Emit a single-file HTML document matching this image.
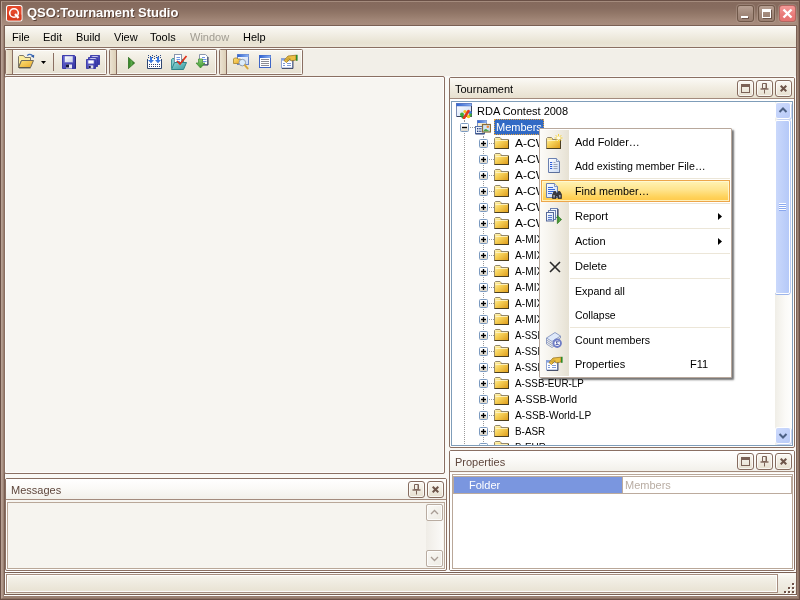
<!DOCTYPE html>
<html>
<head>
<meta charset="utf-8">
<title>QSO:Tournament Studio</title>
<style>
html,body{margin:0;padding:0;}
body{width:800px;height:600px;overflow:hidden;position:relative;background:#9c8273;font-family:"Liberation Sans",sans-serif;font-size:11px;color:#000;}
div,span{box-sizing:border-box;}
.a{position:absolute;}
#frame{position:absolute;left:0;top:0;width:800px;height:600px;background:#9c8273;border:1px solid #6a5046;}
#frame2{position:absolute;left:1px;top:1px;width:798px;height:598px;border:1px solid #b69f92;border-top-color:#a48b7d;border-right-color:#8d7365;border-bottom-color:#8d7365;box-shadow:inset 1px 0 0 #ac9588;}
#titlebar{position:absolute;left:2px;top:2px;width:796px;height:24px;background:linear-gradient(#856a5d 0px,#876c5f 6px,#937869 12px,#a18677 18px,#aa8f80 24px);}
#title{position:absolute;left:27px;top:5px;font-size:13px;font-weight:bold;color:#fff;text-shadow:1px 1px 0 #5a4238;white-space:nowrap;}
#inner{position:absolute;left:4px;top:25px;width:793px;height:570px;border:1px solid #7a6054;background:#faf9f6;}
#menubar{position:absolute;left:5px;top:26px;width:791px;height:21px;background:linear-gradient(#fdfcfa 0,#f8f6f0 2px,#f3f0e7 7px,#ebe6d8 14px,#e8e2d2 17px,#ece7da 21px);}
.mi{position:absolute;top:31px;font-size:11px;white-space:nowrap;}
.hl{position:absolute;height:1px;}
.tb{position:absolute;top:49px;height:26px;border:1px solid #8a6f62;border-radius:1.5px;box-shadow:inset 0 0 0 1px rgba(255,255,255,.75);background:linear-gradient(#f8f6ef,#ece7da 60%,#e7e1d2);}
.grip{position:absolute;left:0px;top:0px;width:7px;height:24px;background:linear-gradient(90deg,#ece3d2,#dccfb6);border-right:1px solid #8a6f62;border-radius:1px 0 0 1px;}
.panel{position:absolute;border:1px solid #8a6f62;background:#f7f5f1;border-radius:2px;box-shadow:inset 0 0 0 1px rgba(255,255,255,.8);}
.phead{position:absolute;left:0;top:0;right:0;height:21px;background:linear-gradient(#fbfaf6 0,#f3efe5 40%,#e7e0cf 100%);border-bottom:1px solid #a38b7d;}
.ptitle{position:absolute;left:5px;top:5px;font-size:11px;color:#000;white-space:nowrap;}
.pbtn{position:absolute;top:2px;width:17px;height:17px;border:1px solid #866c5f;border-radius:3px;background:linear-gradient(#fbf9f4,#e6dfcf);box-shadow:inset 0 0 0 1px rgba(255,255,255,.7);}

.trow{position:absolute;left:0;width:340px;height:16px;}
.tl{position:absolute;top:1px;font-size:11px;line-height:13px;white-space:nowrap;transform-origin:0 0;}
.pm{position:absolute;top:3px;width:9px;height:9px;border:1px solid #7b9ac0;border-radius:1.5px;background:linear-gradient(#fff 20%,#dcd6c8);}
.pm i{position:absolute;background:#000;}
.pm i.h{left:1px;top:3px;width:5px;height:1px;box-shadow:0 .4px 0 rgba(0,0,0,.45),0 -.4px 0 rgba(0,0,0,.45);}
.pm i.v{left:3px;top:1px;width:1px;height:5px;box-shadow:.4px 0 0 rgba(0,0,0,.45),-.4px 0 0 rgba(0,0,0,.45);}
.fi{position:absolute;}
.hc{position:absolute;top:7px;height:1px;border-top:1px dotted #9a9a9a;}

.sbtn{position:absolute;width:14px;height:15px;border-radius:2px;background:linear-gradient(135deg,#cddafc,#b9cbf8);box-shadow:0 0 0 1px #fff,1px 1px 0 1px #c6d3f3;}
.sbtn svg{position:absolute;left:0;top:0;}

.cmi{transform-origin:0 0;position:absolute;left:35px;font-size:11px;line-height:13px;white-space:nowrap;color:#000;}

.wbtn{position:absolute;top:5px;width:17px;height:17px;border:1px solid #705849;border-radius:3px;background:linear-gradient(#b7a093,#a1887a 55%,#9a8072);box-shadow:0 0 0 1px rgba(190,170,158,.35);}
.wclose{background:linear-gradient(#f49a98,#e87a78 60%,#e57472);border-color:#b46660;}
.sq{position:absolute;}

.dbtn{position:absolute;width:17px;height:17px;border:1px solid #b9aca1;border-radius:2px;background:linear-gradient(135deg,#f9f8f4,#eeebe4);box-shadow:inset 0 0 0 1px rgba(255,255,255,.8);}
.dbtn svg{position:absolute;left:0;top:0;}

.inact .phead{background:linear-gradient(#ffffff 0,#faf9f6 50%,#f2f0ea 100%);}
.inact .ptitle{color:#5e463c;}
</style>
</head>
<body>
<div id="root" style="position:absolute;left:0;top:0;width:800px;height:600px;overflow:hidden;transform:translateZ(0);will-change:transform">
<svg width="0" height="0" style="position:absolute">
<defs>
  <linearGradient id="gFold" x1="0" y1="0" x2="1" y2="1"><stop offset="0" stop-color="#fff4bc"/><stop offset=".4" stop-color="#f8d45c"/><stop offset="1" stop-color="#dc9a18"/></linearGradient>
  <symbol id="fold" viewBox="0 0 16 14">
    <path d="M0.5 1.5 L1.5 0.5 L6 0.5 L7 1.5 L7 2.5 L14.5 2.5 L14.5 11.5 L0.5 11.5 Z" fill="url(#gFold)" stroke="#94886c" stroke-width="1"/>
    <path d="M1.5 1.5 H6" stroke="#fdf0a8" stroke-width="1"/>
    <path d="M1.5 3.5 L13.5 3.5" stroke="#fff8d2" stroke-width="1" opacity=".8"/>
    <path d="M0.5 11.5 H15 M14.5 3 V12" stroke="#3f3314" stroke-width="1" opacity=".85"/>
  </symbol>

  <linearGradient id="gBlueBar" x1="0" y1="0" x2="1" y2="0"><stop offset="0" stop-color="#2f62d0"/><stop offset="1" stop-color="#8fb4f2"/></linearGradient>
  <linearGradient id="gWinBody" x1="0" y1="0" x2="1" y2="1"><stop offset="0" stop-color="#ffffff"/><stop offset="1" stop-color="#c9daf5"/></linearGradient>
  <symbol id="icRoot" viewBox="0 0 16 16">
    <rect x="0.5" y="0.5" width="15" height="13" fill="url(#gWinBody)" stroke="#7c8cb4"/>
    <rect x="0.5" y="0.5" width="15" height="2.5" fill="url(#gBlueBar)" stroke="#4a6cc0" stroke-width=".5"/>
    <path d="M15.5 3 V13.5 H1" stroke="#39415c" fill="none"/>
    <circle cx="6" cy="11.5" r="2" fill="#3fae3a"/>
    <circle cx="7" cy="14" r="1.6" fill="#2f9a2f"/>
    <circle cx="9" cy="8.5" r="1.6" fill="#f6c21c"/>
    <circle cx="12.5" cy="13.5" r="1.8" fill="#f6c21c"/>
    <circle cx="14.2" cy="9.5" r="1.6" fill="#3c7de0"/>
    <circle cx="14.5" cy="12" r="1.4" fill="#3fae3a"/>
    <path d="M8 15 L12.5 8" stroke="#e2381c" stroke-width="2.6" stroke-linecap="round"/>
  </symbol>
  <symbol id="icMembers" viewBox="0 0 16 16">
    <rect x="2.5" y="0.5" width="9" height="8" fill="#f6ecd0" stroke="#7e93c4"/>
    <rect x="2.5" y="0.5" width="9" height="2.5" fill="url(#gBlueBar)"/>
    <rect x="0.5" y="6.5" width="9" height="7" fill="#eef3fc" stroke="#5470a8"/>
    <path d="M0.5 14 H9.5" stroke="#2b3f73"/>
    <g fill="#27407e"><rect x="2" y="8" width="1.4" height="1.4"/><rect x="4.3" y="8" width="1.4" height="1.4"/><rect x="6.6" y="8" width="1.4" height="1.4"/><rect x="2" y="10.6" width="1.4" height="1.4"/><rect x="4.3" y="10.6" width="1.4" height="1.4"/><rect x="6.6" y="10.6" width="1.4" height="1.4"/></g>
    <rect x="7.5" y="4.5" width="8" height="7.5" fill="#cfe4f6" stroke="#8a6d3b" stroke-width="1.2"/>
    <circle cx="12.8" cy="6.8" r="1.3" fill="#f08a3c"/>
    <path d="M8.2 11.3 Q10.5 7.5 12.5 10 L14.8 11.3 Z" fill="#4da646"/>
  </symbol>

  <linearGradient id="gFlap" x1="0" y1="0" x2="1" y2="1"><stop offset="0" stop-color="#fde27a"/><stop offset="1" stop-color="#e9a828"/></linearGradient>
  <linearGradient id="gFloppy" x1="0" y1="0" x2="1" y2="1"><stop offset="0" stop-color="#6a6ad8"/><stop offset="1" stop-color="#3434a0"/></linearGradient>
  <linearGradient id="gLabel" x1="0" y1="0" x2="1" y2="1"><stop offset="0" stop-color="#ffffff"/><stop offset="1" stop-color="#c8cfe6"/></linearGradient>
  <linearGradient id="gPlay" x1="0" y1="0" x2="1" y2="0"><stop offset="0" stop-color="#2a7a18"/><stop offset=".5" stop-color="#5aa84a"/><stop offset="1" stop-color="#1f6a10"/></linearGradient>
  <linearGradient id="gGreenArr" x1="0" y1="0" x2="0" y2="1"><stop offset="0" stop-color="#8fd07a"/><stop offset="1" stop-color="#3a962c"/></linearGradient>
  <linearGradient id="gTeal" x1="0" y1="0" x2="1" y2="1"><stop offset="0" stop-color="#8fd6d6"/><stop offset="1" stop-color="#3a9aa0"/></linearGradient>
  <symbol id="floppy" viewBox="0 0 14 14">
    <path d="M0.5 0.5 H12.5 L13.5 1.5 V13.5 H0.5 Z" fill="url(#gFloppy)" stroke="#3a3aa8" stroke-width="1"/>
    <rect x="2.5" y="1" width="8.5" height="6.5" fill="url(#gLabel)" stroke="#5a5ac0" stroke-width=".5"/>
    <rect x="4" y="9.5" width="6" height="4" fill="#e8e8f4"/>
    <rect x="4" y="9.5" width="3" height="3" fill="#15153a"/>
    <path d="M13.5 2 V13.5" stroke="#25257a"/>
  </symbol>
  <symbol id="floppyS" viewBox="0 0 11 11">
    <path d="M0.5 0.5 H10.5 V10.5 H0.5 Z" fill="url(#gFloppy)" stroke="#3535a5" stroke-width="1"/>
    <rect x="2.5" y="1.5" width="6" height="3.5" fill="#fff"/>
    <rect x="3" y="7" width="5" height="3.5" fill="#dcdcec"/>
    <rect x="3" y="7.5" width="2.2" height="2.5" fill="#1a1a40"/>
  </symbol>
</defs>
</svg>
<div id="frame"></div>
<div id="frame2"></div>
<div id="titlebar"></div>
<!-- app icon -->
<svg class="a" style="left:6px;top:5px" width="17" height="17" viewBox="0 0 17 17">
  <rect x="0" y="0" width="16.5" height="16.5" rx="2.5" fill="#fff"/>
  <rect x="1" y="1" width="14.5" height="14.5" rx="1.5" fill="#e4482a"/>
  <rect x="1" y="9" width="14.5" height="6.5" rx="1.5" fill="#cf3519" opacity=".6"/>
  <circle cx="8" cy="8" r="4.3" fill="none" stroke="#fff" stroke-width="1.6"/>
  <path d="M9 9 L12.5 13" stroke="#fff" stroke-width="2.2" stroke-linecap="butt"/>
</svg>
<div id="title">QSO:Tournament Studio</div>

<!-- window buttons -->
<div class="wbtn" style="left:737px"><div class="a" style="left:3px;top:10px;width:7px;height:2px;background:#fff;box-shadow:1px 1px 0 #6d554a"></div></div>
<div class="wbtn" style="left:758px"><div class="a" style="left:3px;top:3px;width:9px;height:9px;border:1px solid #fff;border-top-width:3px;box-shadow:1px 1px 0 #6d554a"></div></div>
<div class="wbtn wclose" style="left:779px"><svg class="a" style="left:2px;top:2px" width="11" height="11" viewBox="0 0 11 11"><path d="M1.5 1.5 L9.5 9.5 M9.5 1.5 L1.5 9.5" stroke="#fff" stroke-width="2.4"/></svg></div>
<div id="inner"></div>
<div id="menubar"></div>
<div class="mi" style="left:12px">File</div>
<div class="mi" style="left:43px">Edit</div>
<div class="mi" style="left:76px">Build</div>
<div class="mi" style="left:114px">View</div>
<div class="mi" style="left:150px">Tools</div>
<div class="mi" style="left:190px;color:#a09c92">Window</div>
<div class="mi" style="left:243px">Help</div>
<div class="hl" style="left:5px;top:47px;width:791px;background:#8a6f62"></div>
<div class="hl" style="left:5px;top:48px;width:791px;background:#fbfaf6"></div>

<!-- toolbars -->
<div class="a" style="left:5px;top:49px;width:791px;height:27px;background:#f2efe8"></div>
<div class="tb" style="left:5px;width:102px"><div class="grip"></div></div>
<div class="tb" style="left:109px;width:108px"><div class="grip"></div></div>
<div class="tb" style="left:219px;width:84px"><div class="grip"></div></div>


<!-- toolbar icons -->
<svg class="a" style="left:18px;top:53px" width="18" height="16" viewBox="0 0 18 16">
  <path d="M0.5 14.5 V3.5 L1.5 2.5 H5.5 L7 4.5 H12.5 V7.5 H3.5 Z" fill="#fcec9e" stroke="#7d7868"/>
  <path d="M3.5 7.5 H15.5 L12.5 14.5 H0.5 Z" fill="url(#gFlap)" stroke="#6f6a5c"/>
  <path d="M1 15 H12.5" stroke="#3d3a30" opacity=".7"/>
  <path d="M9.3 2.6 C10.5 0.9 13.4 0.9 14.8 3.2" fill="none" stroke="#3f6fbe" stroke-width="1.3"/>
  <path d="M13 3.2 L16.2 1.8 L16 5 Z" fill="#2f5aa6"/>
</svg>
<svg class="a" style="left:41px;top:61px" width="5" height="3"><path d="M0 0 H5 L2.5 3 Z" fill="#000"/></svg>
<div class="a" style="left:53px;top:53px;width:1px;height:18px;background:#8a6f62"></div>
<svg class="a" style="left:62px;top:55px" width="14" height="14"><use href="#floppy"/></svg>
<svg class="a" style="left:90px;top:55px" width="10" height="10"><use href="#floppyS"/></svg>
<svg class="a" style="left:88px;top:57px" width="10" height="10"><use href="#floppyS"/></svg>
<svg class="a" style="left:86px;top:59px" width="10" height="10"><use href="#floppyS"/></svg>

<svg class="a" style="left:128px;top:57px" width="7" height="12" viewBox="0 0 7 12"><path d="M0.3 0.3 L6.7 6 L0.3 11.7 Z" fill="url(#gPlay)" stroke="#1d5e10" stroke-width=".6"/></svg>

<svg class="a" style="left:147px;top:54px" width="15" height="15" viewBox="0 0 15 15">
  <rect x="1" y="5" width="13" height="9" fill="#fff"/>
  <path d="M0.5 5 V14.5 H14.5 V5" fill="none" stroke="#2f4670" stroke-width="1"/>
  <g fill="#2f4a80"><rect x="1" y="1" width="1" height="1"/><rect x="3" y="2" width="1" height="1"/><rect x="5" y="1" width="1" height="1"/><rect x="7" y="2" width="1" height="1"/><rect x="9" y="1" width="1" height="1"/><rect x="11" y="2" width="1" height="1"/><rect x="13" y="1" width="1" height="1"/><rect x="1" y="3" width="1" height="1"/><rect x="7" y="4" width="1" height="1"/><rect x="13" y="3" width="1" height="1"/><rect x="9" y="3" width="1" height="1"/><rect x="5" y="3" width="1" height="1"/></g>
  <g fill="#3a78e0"><path d="M3 3 H5 V6 H7 L4 9.2 L1 6 H3 Z"/><path d="M10 3 H12 V6 H14 L11 9.2 L8 6 H10 Z"/></g>
  <g fill="#2b3f73"><rect x="2" y="10" width="1" height="1"/><rect x="4" y="10" width="1" height="1"/><rect x="6" y="10" width="1" height="1"/><rect x="8" y="10" width="1" height="1"/><rect x="10" y="10" width="1" height="1"/><rect x="12" y="10" width="1" height="1"/><rect x="2" y="12" width="1" height="1"/><rect x="4" y="12" width="1" height="1"/><rect x="6" y="12" width="1" height="1"/><rect x="8" y="12" width="1" height="1"/><rect x="10" y="12" width="1" height="1"/><rect x="12" y="12" width="1" height="1"/></g>
</svg>

<svg class="a" style="left:170px;top:53px" width="18" height="18" viewBox="0 0 18 18">
  <path d="M1.5 15.5 V6.5 L2.5 5.5 H6 L7 6.5 H13.5 V9" fill="#7fcaca" stroke="#3e9498"/>
  <rect x="4.5" y="1.5" width="7" height="9" fill="#fff" stroke="#8a96ad"/>
  <path d="M6.5 4.5 H10 M6.5 6.5 H10 M6.5 8.5 H10" stroke="#4a78e0" stroke-width=".8"/>
  <path d="M4.5 9.5 H16.5 L13.5 16.5 H1.5 Z" fill="url(#gTeal)" stroke="#2e8488"/>
  <path d="M7 8 L10 11 L16.5 3" fill="none" stroke="#e0301a" stroke-width="1.7"/>
</svg>

<svg class="a" style="left:195px;top:53px" width="14" height="16" viewBox="0 0 14 16">
  <path d="M4.5 1.5 H10.5 L12.5 3.5 V11.5 H4.5 Z" fill="#fff" stroke="#8a96ad"/>
  <path d="M13 4 V12 H5" fill="none" stroke="#2b3350" stroke-width="1"/>
  <path d="M7 4.5 H10 M7 6.5 H11.5 M8 8.5 H11.5" stroke="#4a78e0" stroke-width=".8"/>
  <path d="M3.5 6 H7.5 V10 H10 L5.5 15 L1 10 H3.5 Z" fill="url(#gGreenArr)" stroke="#3c8a30" stroke-width=".7"/>
</svg>

<svg class="a" style="left:233px;top:53px" width="17" height="17" viewBox="0 0 17 17">
  <rect x="4.5" y="1.5" width="11" height="10" fill="url(#gWinBody)" stroke="#6a86c8"/>
  <rect x="4.5" y="1.5" width="11" height="2.5" fill="url(#gBlueBar)"/>
  <path d="M0.5 10.5 V6 L1.5 5 H4 L5 6 H7.5 V10.5 Z" fill="url(#gFlap)" stroke="#a5822e" stroke-width=".8"/>
  <circle cx="9.3" cy="9.6" r="3.3" fill="#dcecfa" stroke="#8f9cb0" stroke-width="1"/>
  <path d="M11.8 12.2 L14.6 15.4" stroke="#d8a83a" stroke-width="2" stroke-linecap="round"/>
</svg>

<svg class="a" style="left:259px;top:55px" width="12" height="13" viewBox="0 0 12 13">
  <rect x="0.5" y="0.5" width="11" height="12" fill="#fff" stroke="#3f66c6"/>
  <rect x="0.5" y="0.5" width="11" height="2.5" fill="url(#gBlueBar)"/>
  <path d="M2 4.5 H10 M2 6.5 H10 M2 8.5 H10 M2 10.5 H10" stroke="#8c8c94" stroke-width="1"/>
</svg>

<svg class="a" style="left:281px;top:54px" width="17" height="15" viewBox="0 0 17 15">
  <rect x="0.5" y="4.5" width="11" height="9.5" fill="#fff" stroke="#8ea4d4"/>
  <rect x="1" y="5" width="10" height="1.6" fill="#7f9fe6"/>
  <path d="M12 6 V14.5 H1" fill="none" stroke="#2b3350" opacity=".8"/>
  <path d="M2 9.5 H4 M6 9.5 H10 M2 11.5 H4 M6 11.5 H10" stroke="#7f9ad6" stroke-width="1"/>
  <path d="M3 6.5 L7 2 L15 1.2 V6 L10.5 6.8 L8.5 5.5 L5.5 8.5 Z" fill="#ecc044" stroke="#8f6a14" stroke-width=".7"/>
  <path d="M5 6.5 L8 3.5 M6.5 7 L9.5 4 M7 3.5 L10 6.5 M5.5 5 L8 7.5" stroke="#a8801e" stroke-width=".5"/>
  <rect x="15" y="0.8" width="1.6" height="6" fill="#2f8a2a"/>
</svg>
<!-- main panel -->
<div class="panel" id="main" style="left:4px;top:76px;width:441px;height:398px;"></div>
<!-- tournament panel -->
<div class="panel" id="tour" style="left:449px;top:77px;width:346px;height:371px;background:#fff;">
  <div class="phead"><div class="ptitle">Tournament</div>
  <div class="pbtn" style="left:287px"><div class="a" style="left:3px;top:3px;width:9px;height:9px;border:1px solid #7b6257;border-top-width:3px"></div></div><div class="pbtn" style="left:306px"><svg class="a" style="left:3px;top:2px" width="9" height="11" viewBox="0 0 9 11"><path d="M2.5 0.5 H6.5 V5.5 H2.5 Z" fill="none" stroke="#7b6257"/><path d="M6 1 V5" stroke="#7b6257" stroke-width="1"/><path d="M0.5 6 H8.5" stroke="#7b6257" stroke-width="1.4"/><path d="M4.5 6.5 V10.5" stroke="#7b6257"/></svg></div><div class="pbtn" style="left:325px"><svg class="a" style="left:4px;top:4px" width="7" height="7" viewBox="0 0 7 7"><path d="M0.7 0.7 L6.3 6.3 M6.3 0.7 L0.7 6.3" stroke="#6e554a" stroke-width="2"/></svg></div></div>
</div>

<div id="tree" class="a" style="left:451px;top:101px;width:342px;height:345px;border:1px solid #7f9db9;background:#fff;overflow:hidden;">
  <div class="a" style="left:12px;top:18px;width:1px;height:340px;border-left:1px dotted #9a9a9a"></div>
  <div class="a" style="left:31px;top:34px;width:1px;height:340px;border-left:1px dotted #9a9a9a"></div>
  <div class="trow" style="top:2px"><svg class="fi" style="left:4px;top:-1px" width="16" height="16"><use href="#icRoot"/></svg><span class="tl" style="left:25px">RDA Contest 2008</span></div>
  <div class="trow" style="top:18px"><span class="pm" style="left:8px"><i class="h"></i></span><span class="hc" style="left:18px;width:5px"></span><svg class="fi" style="left:23px;top:0px" width="16" height="16"><use href="#icMembers"/></svg><span class="a" style="left:42px;top:-1px;width:50px;height:16px;background:#316ac5;border:1px dotted #e8a33d"></span><span class="tl" style="left:44px;color:#fff">Members</span></div>
  <div class="trow" style="top:34px"><span class="pm" style="left:27px"><i class="h"></i><i class="v"></i></span><span class="hc" style="left:37px;width:5px"></span><svg class="fi" style="left:42px;top:1px" width="16" height="14"><use href="#fold"/></svg><span class="tl" style="left:63px;transform:scaleX(1.1)">A-CW</span></div>
  <div class="trow" style="top:50px"><span class="pm" style="left:27px"><i class="h"></i><i class="v"></i></span><span class="hc" style="left:37px;width:5px"></span><svg class="fi" style="left:42px;top:1px" width="16" height="14"><use href="#fold"/></svg><span class="tl" style="left:63px;transform:scaleX(1.1)">A-CW</span></div>
  <div class="trow" style="top:66px"><span class="pm" style="left:27px"><i class="h"></i><i class="v"></i></span><span class="hc" style="left:37px;width:5px"></span><svg class="fi" style="left:42px;top:1px" width="16" height="14"><use href="#fold"/></svg><span class="tl" style="left:63px;transform:scaleX(1.1)">A-CW</span></div>
  <div class="trow" style="top:82px"><span class="pm" style="left:27px"><i class="h"></i><i class="v"></i></span><span class="hc" style="left:37px;width:5px"></span><svg class="fi" style="left:42px;top:1px" width="16" height="14"><use href="#fold"/></svg><span class="tl" style="left:63px;transform:scaleX(1.1)">A-CW</span></div>
  <div class="trow" style="top:98px"><span class="pm" style="left:27px"><i class="h"></i><i class="v"></i></span><span class="hc" style="left:37px;width:5px"></span><svg class="fi" style="left:42px;top:1px" width="16" height="14"><use href="#fold"/></svg><span class="tl" style="left:63px;transform:scaleX(1.1)">A-CW</span></div>
  <div class="trow" style="top:114px"><span class="pm" style="left:27px"><i class="h"></i><i class="v"></i></span><span class="hc" style="left:37px;width:5px"></span><svg class="fi" style="left:42px;top:1px" width="16" height="14"><use href="#fold"/></svg><span class="tl" style="left:63px;transform:scaleX(1.1)">A-CW</span></div>
  <div class="trow" style="top:130px"><span class="pm" style="left:27px"><i class="h"></i><i class="v"></i></span><span class="hc" style="left:37px;width:5px"></span><svg class="fi" style="left:42px;top:1px" width="16" height="14"><use href="#fold"/></svg><span class="tl" style="left:63px;transform:scaleX(0.93)">A-MIX</span></div>
  <div class="trow" style="top:146px"><span class="pm" style="left:27px"><i class="h"></i><i class="v"></i></span><span class="hc" style="left:37px;width:5px"></span><svg class="fi" style="left:42px;top:1px" width="16" height="14"><use href="#fold"/></svg><span class="tl" style="left:63px;transform:scaleX(0.93)">A-MIX</span></div>
  <div class="trow" style="top:162px"><span class="pm" style="left:27px"><i class="h"></i><i class="v"></i></span><span class="hc" style="left:37px;width:5px"></span><svg class="fi" style="left:42px;top:1px" width="16" height="14"><use href="#fold"/></svg><span class="tl" style="left:63px;transform:scaleX(0.93)">A-MIX</span></div>
  <div class="trow" style="top:178px"><span class="pm" style="left:27px"><i class="h"></i><i class="v"></i></span><span class="hc" style="left:37px;width:5px"></span><svg class="fi" style="left:42px;top:1px" width="16" height="14"><use href="#fold"/></svg><span class="tl" style="left:63px;transform:scaleX(0.93)">A-MIX</span></div>
  <div class="trow" style="top:194px"><span class="pm" style="left:27px"><i class="h"></i><i class="v"></i></span><span class="hc" style="left:37px;width:5px"></span><svg class="fi" style="left:42px;top:1px" width="16" height="14"><use href="#fold"/></svg><span class="tl" style="left:63px;transform:scaleX(0.93)">A-MIX</span></div>
  <div class="trow" style="top:210px"><span class="pm" style="left:27px"><i class="h"></i><i class="v"></i></span><span class="hc" style="left:37px;width:5px"></span><svg class="fi" style="left:42px;top:1px" width="16" height="14"><use href="#fold"/></svg><span class="tl" style="left:63px;transform:scaleX(0.93)">A-MIX</span></div>
  <div class="trow" style="top:226px"><span class="pm" style="left:27px"><i class="h"></i><i class="v"></i></span><span class="hc" style="left:37px;width:5px"></span><svg class="fi" style="left:42px;top:1px" width="16" height="14"><use href="#fold"/></svg><span class="tl" style="left:63px;transform:scaleX(0.875)">A-SSB</span></div>
  <div class="trow" style="top:242px"><span class="pm" style="left:27px"><i class="h"></i><i class="v"></i></span><span class="hc" style="left:37px;width:5px"></span><svg class="fi" style="left:42px;top:1px" width="16" height="14"><use href="#fold"/></svg><span class="tl" style="left:63px;transform:scaleX(0.875)">A-SSB</span></div>
  <div class="trow" style="top:258px"><span class="pm" style="left:27px"><i class="h"></i><i class="v"></i></span><span class="hc" style="left:37px;width:5px"></span><svg class="fi" style="left:42px;top:1px" width="16" height="14"><use href="#fold"/></svg><span class="tl" style="left:63px;transform:scaleX(0.875)">A-SSB</span></div>
  <div class="trow" style="top:274px"><span class="pm" style="left:27px"><i class="h"></i><i class="v"></i></span><span class="hc" style="left:37px;width:5px"></span><svg class="fi" style="left:42px;top:1px" width="16" height="14"><use href="#fold"/></svg><span class="tl" style="left:63px;transform:scaleX(0.893)">A-SSB-EUR-LP</span></div>
  <div class="trow" style="top:290px"><span class="pm" style="left:27px"><i class="h"></i><i class="v"></i></span><span class="hc" style="left:37px;width:5px"></span><svg class="fi" style="left:42px;top:1px" width="16" height="14"><use href="#fold"/></svg><span class="tl" style="left:63px;transform:scaleX(0.95)">A-SSB-World</span></div>
  <div class="trow" style="top:306px"><span class="pm" style="left:27px"><i class="h"></i><i class="v"></i></span><span class="hc" style="left:37px;width:5px"></span><svg class="fi" style="left:42px;top:1px" width="16" height="14"><use href="#fold"/></svg><span class="tl" style="left:63px;transform:scaleX(0.926)">A-SSB-World-LP</span></div>
  <div class="trow" style="top:322px"><span class="pm" style="left:27px"><i class="h"></i><i class="v"></i></span><span class="hc" style="left:37px;width:5px"></span><svg class="fi" style="left:42px;top:1px" width="16" height="14"><use href="#fold"/></svg><span class="tl" style="left:63px;transform:scaleX(0.9)">B-ASR</span></div>
  <div class="trow" style="top:338px"><span class="pm" style="left:27px"><i class="h"></i><i class="v"></i></span><span class="hc" style="left:37px;width:5px"></span><svg class="fi" style="left:42px;top:1px" width="16" height="14"><use href="#fold"/></svg><span class="tl" style="left:63px;transform:scaleX(0.9)">B-EUR</span></div>

  <!-- tree scrollbar (inner coords: origin 452,102) -->
  <div class="a" style="left:323px;top:0;width:17px;height:343px;background:linear-gradient(90deg,#f0eee7,#fbfaf7 60%,#fefefd)"></div>
  <div class="sbtn" style="left:324px;top:1px"><svg width="15" height="15" viewBox="0 0 15 15"><path d="M3.5 9 L7 5.5 L10.5 9" fill="none" stroke="#4d6185" stroke-width="2" stroke-linejoin="miter"/></svg></div>
  <div class="sbtn" style="left:324px;top:326px"><svg width="15" height="15" viewBox="0 0 15 15"><path d="M3.5 6 L7 9.5 L10.5 6" fill="none" stroke="#4d6185" stroke-width="2" stroke-linejoin="miter"/></svg></div>
  <div class="a" style="left:323px;top:18px;width:15px;height:174px;border:1px solid #fff;border-radius:2px;background:linear-gradient(90deg,#cad8fb,#b5c9f8);box-shadow:0 1px 0 #9db5ea, 1px 0 0 #b9cbf3"></div>
  <div class="a" style="left:327px;top:101px;width:7px;height:8px;background:repeating-linear-gradient(#fff 0,#fff 1px,#8aa8f0 1px,#8aa8f0 2px)"></div>
</div>
<!-- properties panel -->
<div class="panel inact" id="props" style="left:449px;top:450px;width:346px;height:121px;">
  <div class="phead"><div class="ptitle">Properties</div>
  <div class="pbtn" style="left:287px"><div class="a" style="left:3px;top:3px;width:9px;height:9px;border:1px solid #7b6257;border-top-width:3px"></div></div><div class="pbtn" style="left:306px"><svg class="a" style="left:3px;top:2px" width="9" height="11" viewBox="0 0 9 11"><path d="M2.5 0.5 H6.5 V5.5 H2.5 Z" fill="none" stroke="#7b6257"/><path d="M6 1 V5" stroke="#7b6257" stroke-width="1"/><path d="M0.5 6 H8.5" stroke="#7b6257" stroke-width="1.4"/><path d="M4.5 6.5 V10.5" stroke="#7b6257"/></svg></div><div class="pbtn" style="left:325px"><svg class="a" style="left:4px;top:4px" width="7" height="7" viewBox="0 0 7 7"><path d="M0.7 0.7 L6.3 6.3 M6.3 0.7 L0.7 6.3" stroke="#6e554a" stroke-width="2"/></svg></div></div>

  <div class="a" style="left:0;top:22px;width:344px;height:97px;background:#fff"></div>
  <div class="a" style="left:2px;top:23px;width:341px;height:95px;border:1px solid #b9a798;background:#fff"></div>
  <div class="a" style="left:3px;top:25px;width:339px;height:18px;border:1px solid #bcab9d;background:#fff"></div>
  <div class="a" style="left:4px;top:26px;width:168px;height:16px;background:#7a96df"></div>
  <div class="a" style="left:172px;top:26px;width:1px;height:16px;background:#bcab9d"></div>
  <div class="a" style="left:19px;top:28px;color:#fff;line-height:13px;white-space:nowrap">Folder</div>
  <div class="a" style="left:175px;top:28px;color:#b9ada3;line-height:13px;white-space:nowrap">Members</div>
</div>
<!-- messages panel -->
<div class="panel inact" id="msgs" style="left:5px;top:478px;width:442px;height:93px;">
  <div class="phead"><div class="ptitle">Messages</div>
  <div class="pbtn" style="left:402px"><svg class="a" style="left:3px;top:2px" width="9" height="11" viewBox="0 0 9 11"><path d="M2.5 0.5 H6.5 V5.5 H2.5 Z" fill="none" stroke="#7b6257"/><path d="M6 1 V5" stroke="#7b6257" stroke-width="1"/><path d="M0.5 6 H8.5" stroke="#7b6257" stroke-width="1.4"/><path d="M4.5 6.5 V10.5" stroke="#7b6257"/></svg></div><div class="pbtn" style="left:421px"><svg class="a" style="left:4px;top:4px" width="7" height="7" viewBox="0 0 7 7"><path d="M0.7 0.7 L6.3 6.3 M6.3 0.7 L0.7 6.3" stroke="#6e554a" stroke-width="2"/></svg></div></div>

  <div class="a" style="left:1px;top:23px;width:438px;height:67px;border:1px solid #b9a798;background:#f6f4ef"></div>
  <div class="a" style="left:420px;top:25px;width:17px;height:63px;background:linear-gradient(90deg,#efece6,#fbfaf8)"></div>
  <div class="dbtn" style="left:420px;top:25px"><svg width="15" height="15" viewBox="0 0 15 15"><path d="M4 9 L7.5 5.5 L11 9" fill="none" stroke="#a89d95" stroke-width="1.3"/></svg></div>
  <div class="dbtn" style="left:420px;top:71px"><svg width="15" height="15" viewBox="0 0 15 15"><path d="M4 6 L7.5 9.5 L11 6" fill="none" stroke="#a89d95" stroke-width="1.3"/></svg></div>
</div>
<!-- status bar -->
<div class="hl" style="left:5px;top:571px;width:791px;background:#fff"></div>
<div class="hl" style="left:4px;top:572px;width:792px;background:#7a6054"></div>
<div id="status" class="a" style="left:5px;top:573px;width:791px;height:21px;background:linear-gradient(#fbfaf7,#f3f0e8 30%,#e9e4d6);border-left:1px solid #fff"></div>
<div class="a" style="left:6px;top:574px;width:772px;height:19px;border:1px solid #a58d7f;background:linear-gradient(#f6f4ed,#efebe0 45%,#e8e2d2);box-shadow:inset 0 0 0 1px rgba(255,255,255,.85)"></div>
<svg class="a" style="left:783px;top:582px" width="13" height="12" viewBox="0 0 13 12">
  <g fill="#fff"><rect x="10" y="2" width="2" height="2"/><rect x="6" y="6" width="2" height="2"/><rect x="10" y="6" width="2" height="2"/><rect x="2" y="10" width="2" height="2"/><rect x="6" y="10" width="2" height="2"/><rect x="10" y="10" width="2" height="2"/></g>
  <g fill="#6e5146"><rect x="9" y="1" width="2" height="2"/><rect x="5" y="5" width="2" height="2"/><rect x="9" y="5" width="2" height="2"/><rect x="1" y="9" width="2" height="2"/><rect x="5" y="9" width="2" height="2"/><rect x="9" y="9" width="2" height="2"/></g>
</svg>
<div class="hl" style="left:4px;top:594px;width:792px;background:#7a6054"></div>
<div class="hl" style="left:4px;top:595px;width:793px;background:#fff"></div>
<!-- context menu -->
<div id="ctx" class="a" style="left:539px;top:128px;width:193px;height:250px;border:1px solid #b8a89c;border-radius:1px;background:#fff;box-shadow:2px 2px 2px rgba(0,0,0,.55);">
<div class="a" style="left:0;top:1px;width:29px;height:246px;background:linear-gradient(90deg,#fcfbf8,#f3f0e8 50%,#e6e1d3)"></div>
<div class="a" style="left:30px;top:49px;width:160px;height:1px;background:#ece6d8"></div>
<div class="a" style="left:30px;top:74px;width:160px;height:1px;background:#ece6d8"></div>
<div class="a" style="left:30px;top:99px;width:160px;height:1px;background:#ece6d8"></div>
<div class="a" style="left:30px;top:124px;width:160px;height:1px;background:#ece6d8"></div>
<div class="a" style="left:30px;top:149px;width:160px;height:1px;background:#ece6d8"></div>
<div class="a" style="left:30px;top:198px;width:160px;height:1px;background:#ece6d8"></div>
<div class="a" style="left:1px;top:51px;width:189px;height:22px;border:1px solid #eda64a;background:linear-gradient(#fff3b5 0,#ffe48c 45%,#ffd25a 80%,#ffc94a 100%);box-shadow:inset 0 0 0 1px rgba(255,250,215,.8)"></div>
<div class="cmi" style="top:7px">Add Folder…</div>
<div class="cmi" style="top:31px;transform:scaleX(0.966)">Add existing member File…</div>
<div class="cmi" style="top:56px;transform:scaleX(0.98)">Find member…</div>
<div class="cmi" style="top:81px">Report</div>
<svg class="a" style="left:178px;top:84px" width="4" height="7"><path d="M0 0 L4 3.5 L0 7 Z" fill="#000"/></svg>
<div class="cmi" style="top:106px">Action</div>
<svg class="a" style="left:178px;top:109px" width="4" height="7"><path d="M0 0 L4 3.5 L0 7 Z" fill="#000"/></svg>
<div class="cmi" style="top:131px">Delete</div>
<div class="cmi" style="top:156px;transform:scaleX(0.97)">Expand all</div>
<div class="cmi" style="top:180px;transform:scaleX(0.95)">Collapse</div>
<div class="cmi" style="top:205px;transform:scaleX(0.96)">Count members</div>
<div class="cmi" style="top:229px">Properties</div>
<div class="cmi" style="top:229px;left:150px">F11</div>

<!-- ctx icons -->
<svg class="a" style="left:6px;top:5px" width="17" height="16" viewBox="0 0 17 16">
  <path d="M0.5 4.5 L1.5 3.5 H5.5 L6.5 4.5 V5.5 H14.5 V14.5 H0.5 Z" fill="url(#gFold)" stroke="#94886c"/>
  <path d="M1.5 6.5 H13.5" stroke="#fff8d2" opacity=".8"/>
  <path d="M0.5 14.5 H15 M14.5 6 V15" stroke="#3f3314" opacity=".85"/>
  <g stroke="#f6d23a" stroke-width="1"><path d="M12.5 0 V8 M8.5 4 H16.5 M9.7 1.2 L15.3 6.8 M15.3 1.2 L9.7 6.8"/></g>
  <circle cx="12.5" cy="4" r="1.8" fill="#fffbe6"/>
</svg>
<svg class="a" style="left:8px;top:29px" width="12" height="15" viewBox="0 0 12 15">
  <path d="M0.5 0.5 H8.5 L11.5 3.5 V14.5 H0.5 Z" fill="url(#gWinBody)" stroke="#6a80b0"/>
  <path d="M8.5 0.5 V3.5 H11.5" fill="#dfe8f8" stroke="#6a80b0" stroke-width=".8"/>
  <path d="M1 15 H12 " stroke="#39476a" opacity=".6"/>
  <path d="M2 4.5 H4.2 M2 6.5 H4.2 M2 8.5 H4.2 M2 10.5 H4.2" stroke="#2a5ad8" stroke-width="1.2"/>
  <path d="M5.5 4.5 H7.5 M5.5 6.5 H9.5 M5.5 8.5 H9.5 M5.5 10.5 H9.5" stroke="#9aa4b8" stroke-width="1"/>
</svg>
<svg class="a" style="left:6px;top:54px" width="16" height="16" viewBox="0 0 16 16">
  <path d="M0.5 0.5 H8.5 L11.5 3.5 V14.5 H0.5 Z" fill="url(#gWinBody)" stroke="#6a80b0"/>
  <path d="M8.5 0.5 V3.5 H11.5" fill="#dfe8f8" stroke="#6a80b0" stroke-width=".8"/>
  <path d="M2 4.5 H7 M2 6.5 H9 M2 8.5 H8 M2 10.5 H6" stroke="#3a6ad8" stroke-width="1"/>
  <path d="M6.5 15.5 V11.5 L8 8.5 H9.8 L10.5 10.5 H11.5 L12.2 8.5 H14 L15.5 11.5 V15.5 H12 V13 H10 V15.5 Z" fill="#3a3a40" stroke="#1c1c20" stroke-width=".6"/>
  <rect x="7.3" y="12" width="1.6" height="2.5" fill="#9aa0ac"/><rect x="13" y="12" width="1.6" height="2.5" fill="#9aa0ac"/>
</svg>
<svg class="a" style="left:6px;top:79px" width="16" height="16" viewBox="0 0 16 16">
  <rect x="4.5" y="0.5" width="7" height="9" fill="#f4f8ff" stroke="#6a80b0"/>
  <rect x="2.5" y="2.5" width="7" height="9" fill="#f4f8ff" stroke="#6a80b0"/>
  <rect x="0.5" y="4.5" width="7" height="8.5" fill="url(#gWinBody)" stroke="#56699a"/>
  <path d="M12 1 V8" stroke="#2b3350" stroke-width="1"/>
  <path d="M2 7.5 H6 M2 9.5 H6 M2 11.5 H6" stroke="#5a7ac8" stroke-width="1"/>
  <path d="M11.3 7.3 L15.6 11.5 L11.3 15.7 Z" fill="url(#gPlay)" stroke="#2a7a1c" stroke-width=".6"/>
</svg>
<svg class="a" style="left:9px;top:132px" width="12" height="12" viewBox="0 0 12 12"><path d="M1 1 L11 11 M11 1 L1 11" stroke="#2a2a2a" stroke-width="1.6"/></svg>
<svg class="a" style="left:6px;top:203px" width="16" height="16" viewBox="0 0 16 16">
  <path d="M0.5 6 L9 0.5 L14.5 4 L6 9.5 Z" fill="#dfe9fa" stroke="#7a8cba" stroke-width=".8"/>
  <path d="M0.5 6 V8 L6 11.5 L14.5 6 V4 M0.5 8 V10 L6 13.5 L9 11.5 M0.5 10 V12 L6 15.5 L8 14" fill="none" stroke="#7a8cba" stroke-width=".8"/>
  <circle cx="11.2" cy="11.2" r="3.7" fill="#fff" stroke="#6e7cc6" stroke-width="2"/>
  <path d="M12.8 9.8 H9.9 L11.2 11.2 L9.9 12.6 H12.8" fill="none" stroke="#4a58a8" stroke-width="1"/>
</svg>
<svg class="a" style="left:6px;top:227px" width="17" height="15" viewBox="0 0 17 15">
  <rect x="0.5" y="4.5" width="11" height="9.5" fill="#fff" stroke="#8ea4d4"/>
  <rect x="1" y="5" width="10" height="1.6" fill="#7f9fe6"/>
  <path d="M12 6 V14.5 H1" fill="none" stroke="#2b3350" opacity=".8"/>
  <path d="M2 9.5 H4 M6 9.5 H10 M2 11.5 H4 M6 11.5 H10" stroke="#7f9ad6" stroke-width="1"/>
  <path d="M3 6.5 L7 2 L15 1.2 V6 L10.5 6.8 L8.5 5.5 L5.5 8.5 Z" fill="#ecc044" stroke="#8f6a14" stroke-width=".7"/>
  <path d="M5 6.5 L8 3.5 M6.5 7 L9.5 4 M7 3.5 L10 6.5 M5.5 5 L8 7.5" stroke="#a8801e" stroke-width=".5"/>
  <rect x="15" y="0.8" width="1.6" height="6" fill="#2f8a2a"/>
</svg>
</div>
</div>
</body>
</html>
